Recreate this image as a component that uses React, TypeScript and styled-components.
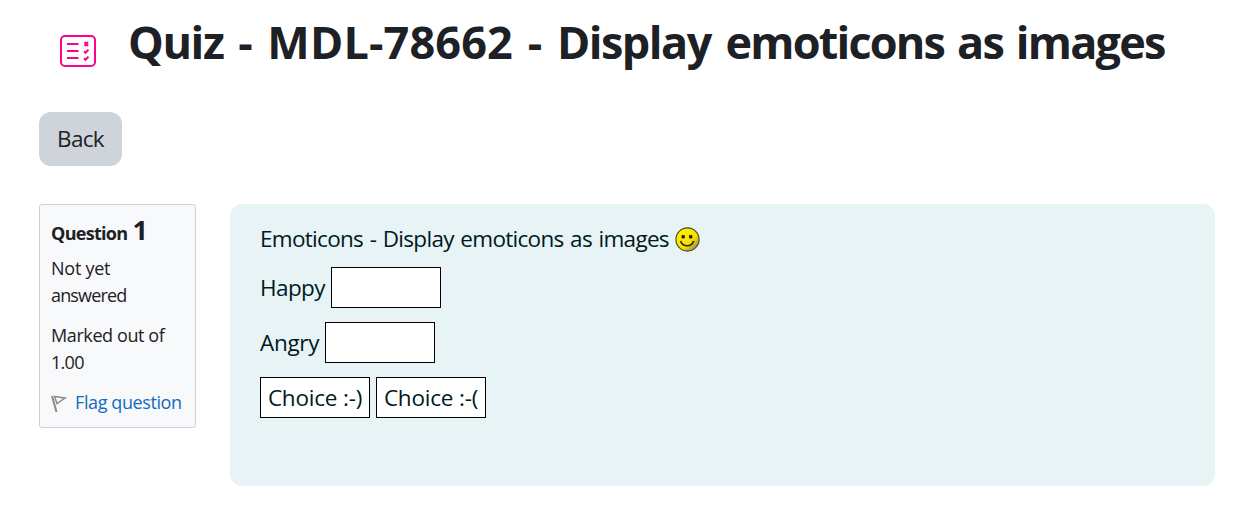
import styled, { createGlobalStyle } from "styled-components";

const GlobalStyle = createGlobalStyle`
    * {
        box-sizing: border-box;
    }

    body {
        margin: 0;
        background: #fff;
        color: #1d2125;
        font-family: "Open Sans", "Noto Sans", sans-serif;
        font-size: 22.5px;
    }
`;

const Page = styled.main`
    height: 507px;
    padding: 18px 27px 0 39px;
    overflow: hidden;
`;

const Header = styled.header`
    display: flex;
    align-items: flex-start;
    height: 94px;
`;

const ActivityIcon = styled.svg`
    flex: none;
    width: 38px;
    height: 34px;
    margin: 16px 31px 0 20px;
    color: #f7058d;
`;

const Title = styled.h1`
    margin: 0;
    font-size: 45px;
    font-weight: 700;
    line-height: 48px;
    word-spacing: 3px;
    white-space: nowrap;
`;

const Text = styled.span<{ $tracking?: number }>`
    letter-spacing: ${({ $tracking = 0 }) => $tracking}px;
`;

const BackButton = styled.button`
    display: block;
    width: 83px;
    height: 54px;
    padding: 0 0 2px;
    border: 0;
    border-radius: 12px;
    background: #ced4da;
    color: inherit;
    font: inherit;
`;

const Question = styled.section`
    display: flex;
    align-items: flex-start;
    gap: 34px;
    margin-top: 38px;
`;

const Info = styled.aside`
    flex: none;
    width: 157px;
    height: 224px;
    padding: 9px 11px;
    border: 1px solid #cad0d7;
    border-radius: 3px;
    background: #f8f9fa;
    font-size: 18px;
    line-height: 27px;
    white-space: nowrap;

    p {
        margin: 0 0 13px;
    }
`;

const QuestionNumber = styled.h3`
    margin: 0 0 6px;
    font-size: 18px;
    line-height: 32px;
    letter-spacing: -0.7px;
`;

const Num = styled.span`
    margin-left: 1px;
    font-size: 27px;
`;

const Line = styled(Text)`
    display: block;
`;

const Flag = styled.a`
    display: flex;
    align-items: center;
    gap: 8px;
    color: #0f6cbf;

    svg {
        flex: none;
        margin-top: 2px;
    }
`;

const Formulation = styled.div`
    flex: 1;
    height: 282px;
    padding: 17px 30px;
    border-radius: 12px;
    background: #e7f3f5;
    color: #001a1e;
`;

const Row = styled.div`
    display: flex;
    align-items: center;
    gap: 6px;
    margin-bottom: 14px;
`;

const QuestionText = styled(Row)`
    height: 34px;
    margin-bottom: 12px;
    word-spacing: 1.4px;

    svg {
        margin-top: 3px;
    }
`;

const Box = styled.span`
    display: flex;
    align-items: center;
    justify-content: center;
    width: 110px;
    height: 41px;
    border: 1px solid #000;
    background: #fff;
    white-space: nowrap;
`;

const Smiley = () => (
    <svg width="25" height="25" viewBox="0 0 25 25">
        <defs>
            <linearGradient id="face" x1="0.15" y1="0.15" x2="0.85" y2="0.85">
                <stop offset="0" stopColor="#fff000" />
                <stop offset="0.65" stopColor="#f8df00" />
                <stop offset="1" stopColor="#a3954a" />
            </linearGradient>
        </defs>
        <circle cx="12.5" cy="12.5" r="11.6" fill="url(#face)" stroke="#4a4620" strokeWidth="1.1" />
        <rect x="6.5" y="8" width="3.4" height="3.6" rx="1" fill="#2b2700" />
        <rect x="14" y="8" width="3.4" height="3.6" rx="1" fill="#2b2700" />
        <path d="M5.5 14c1.2 3.2 3.7 4.8 6.6 4.8s5.4-1.6 6.6-4.8" fill="none" stroke="#2b2700" strokeWidth="1.6" />
    </svg>
);

export default function App() {
    return (
        <>
            <GlobalStyle />
            <Page>
                <Header>
                    <ActivityIcon viewBox="0 0 38 34" fill="none" stroke="currentColor" strokeWidth="2">
                        <rect x="2" y="2" width="34" height="30" rx="4" />
                        <path d="M8 10h11.5M8 17h11.5M8 24h11.5" />
                        <path d="M25.5 8l3.5 4M29 8l-3.5 4" />
                        <path d="M25 17.3l1.5 1.5 3-3.2M25 24.3l1.5 1.5 3-3.2" />
                    </ActivityIcon>
                    <Title>
                        <Text $tracking={-1.4}>Quiz</Text> - <Text $tracking={0.15}>MDL-78662</Text> -{" "}
                        <Text $tracking={-1.5}>Display</Text> <Text $tracking={-1.8}>emoticons as images</Text>
                    </Title>
                </Header>
                <BackButton>
                    <Text $tracking={-0.7}>Back</Text>
                </BackButton>
                <Question>
                    <Info>
                        <QuestionNumber>
                            Question <Num>1</Num>
                        </QuestionNumber>
                        <p>
                            <Line $tracking={-0.25}>Not yet</Line>
                            <Line $tracking={-0.85}>answered</Line>
                        </p>
                        <p>
                            <Line $tracking={-0.4}>Marked out of</Line>
                            <Line $tracking={-0.7}>1.00</Line>
                        </p>
                        <Flag>
                            <svg width="16" height="18" viewBox="0 0 16 18" fill="none" stroke="#8b8b8b" strokeWidth="1.5">
                                <path d="M1 1l4.5 16" strokeWidth="2" />
                                <path d="M3.5 1.5l10.5 1.5-8 5.5z" />
                            </svg>
                            <Line $tracking={-0.4}>Flag question</Line>
                        </Flag>
                    </Info>
                    <Formulation>
                        <QuestionText>
                            <Line $tracking={-0.7}>Emoticons - Display emoticons as images</Line>
                            <Smiley />
                        </QuestionText>
                        <Row>
                            <Line $tracking={-0.6}>Happy</Line>
                            <Box />
                        </Row>
                        <Row>
                            <Line $tracking={-0.3}>Angry</Line>
                            <Box />
                        </Row>
                        <Row>
                            <Box>
                                <Text $tracking={-0.2}>Choice :-)</Text>
                            </Box>
                            <Box>
                                <Text $tracking={-0.2}>Choice :-(</Text>
                            </Box>
                        </Row>
                    </Formulation>
                </Question>
            </Page>
        </>
    );
}
